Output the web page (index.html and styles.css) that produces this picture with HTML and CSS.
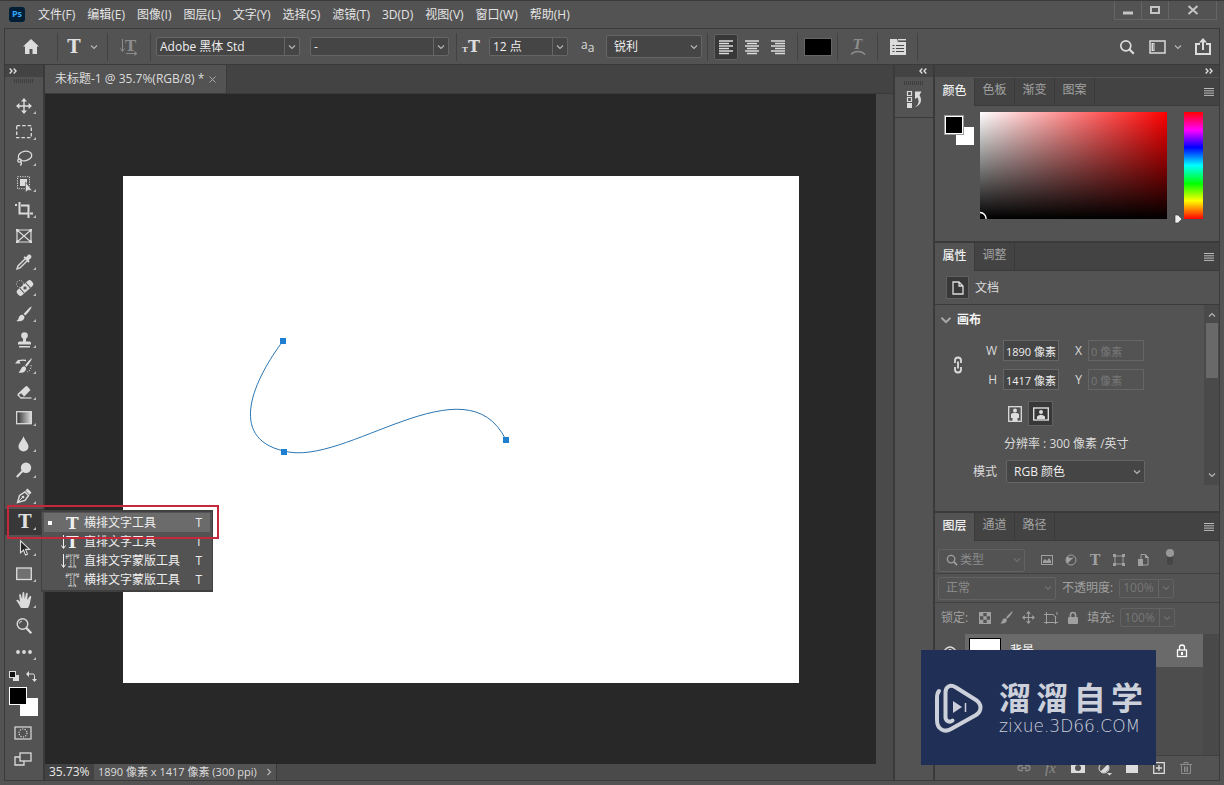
FILE: index.html
```
<!DOCTYPE html>
<html lang="zh-CN">
<head>
    <meta charset="UTF-8">
    <meta name="viewport" content="width=device-width, initial-scale=1.0">
    <title>未标题-1 @ 35.7%(RGB/8) *</title>
    <link rel="stylesheet" href="styles.css">
</head>
<body>
    <!-- shared icon shapes -->
    <svg class="sprite" aria-hidden="true">
        <symbol id="chevron" viewBox="0 0 8 8"><path d="M1 2.5l3 3 3-3" fill="none" stroke="currentColor" stroke-width="1.2"/></symbol>
        <symbol id="lines" viewBox="0 0 10 8"><path d="M0 .5h10M0 2.8h10M0 5.1h10M0 7.4h10" stroke="currentColor"/></symbol>
        <symbol id="dbl" viewBox="0 0 8 6"><path d="M.7.5L3 3 .7 5.5M4.7.5L7 3 4.7 5.5" fill="none" stroke="currentColor" stroke-width="1.4"/></symbol>
        <symbol id="search" viewBox="0 0 16 16"><circle cx="6.8" cy="6.8" r="5" fill="none" stroke="currentColor" stroke-width="1.7"/><path d="M10.5 10.5l4.3 4.3" stroke="currentColor" stroke-width="2.2"/></symbol>
        <symbol id="move" viewBox="0 0 16 16"><path d="M8 2v12M2 8h12" stroke="currentColor" stroke-width="1.4"/><path d="M8 0l3 3.4H5zM8 16l3-3.4H5zM0 8l3.4-3v6zM16 8l-3.4-3v6z" fill="currentColor"/></symbol>
        <symbol id="brush" viewBox="0 0 16 16"><path d="M15.6.4c-1 0-5.8 4.6-8 7.6l1.6 1.6C12 7 16 1.6 15.6.4zM6.8 8.8C4 8.6 3 10.5 2.5 12.500 2.2 13.8 1 14.7.2 15c3.5.8 8.6 0 8.2-4.6z" fill="currentColor"/></symbol>
        <symbol id="lock" viewBox="0 0 12 14"><path d="M3.5 6V4a2.5 2.5 0 0 1 5 0v2" fill="none" stroke="currentColor" stroke-width="1.6"/><rect x="1" y="6" width="10" height="7" rx="1" fill="currentColor"/></symbol>
    </svg>

    <header class="menubar">
        <span class="logo">Ps</span>
        <nav class="menus">
            <a href="#">文件(F)</a>
            <a href="#">编辑(E)</a>
            <a href="#">图像(I)</a>
            <a href="#">图层(L)</a>
            <a href="#">文字(Y)</a>
            <a href="#">选择(S)</a>
            <a href="#">滤镜(T)</a>
            <a href="#">3D(D)</a>
            <a href="#">视图(V)</a>
            <a href="#">窗口(W)</a>
            <a href="#">帮助(H)</a>
        </nav>
        <div class="window-buttons">
            <button aria-label="最小化"><svg width="12" height="10"><path d="M1 8h10" stroke="currentColor" stroke-width="3"/></svg></button>
            <button aria-label="最大化"><svg width="12" height="10"><rect x="2" y="2" width="8" height="6" fill="none" stroke="currentColor" stroke-width="2"/></svg></button>
            <button class="close" aria-label="关闭"><svg width="12" height="10"><path d="M1.5 1l9 8M10.5 1l-9 8" stroke="currentColor" stroke-width="2"/></svg></button>
        </div>
    </header>

    <div class="options">
        <div class="cell home">
            <button aria-label="主页"><svg width="18" height="16" viewBox="0 0 18 16"><path d="M9 0L1 7.5h2V15h4.500v-5h3v5H15V7.500h2z" fill="currentColor"/></svg></button>
        </div>
        <div class="cell type">
            <button class="slab" aria-label="文字工具">T</button>
            <svg class="chev"><use href="#chevron"/></svg>
        </div>
        <div class="cell orient">
            <button class="dim" aria-label="切换文本取向"><svg width="18" height="16"><path d="M2.5 0v12M.5 9.500l2 3 2-3M6 14.500h10M14 12.500l3 2-3 2" fill="none" stroke="currentColor"/><text x="5" y="12" class="svg-t" font-size="15">T</text></svg></button>
        </div>
        <div class="cell fonts">
            <span class="combo split family"><select aria-label="字体"><option>Adobe 黑体 Std</option></select><svg class="chev"><use href="#chevron"/></svg></span>
            <span class="combo split style"><select aria-label="字体样式"><option>-</option></select><svg class="chev"><use href="#chevron"/></svg></span>
        </div>
        <div class="cell size">
            <span class="size-icon"><small>T</small>T</span>
            <span class="combo split points"><select aria-label="字体大小"><option>12 点</option></select><svg class="chev"><use href="#chevron"/></svg></span>
            <span class="aa-icon">a<small>a</small></span>
            <span class="combo tall"><select aria-label="消除锯齿"><option>锐利</option></select><svg class="chev"><use href="#chevron"/></svg></span>
        </div>
        <div class="cell align">
            <button class="on" aria-label="左对齐"><svg width="14" height="14"><path d="M0 1h14M0 3.500h10M0 6h14M0 8.500h10M0 11h14M0 13.500h10" stroke="currentColor" stroke-width="1.3"/></svg></button>
            <button aria-label="居中"><svg width="14" height="14"><path d="M0 1h14M2 3.500h10M0 6h14M2 8.500h10M0 11h14M2 13.500h10" stroke="currentColor" stroke-width="1.3"/></svg></button>
            <button aria-label="右对齐"><svg width="14" height="14"><path d="M0 1h14M4 3.500h10M0 6h14M4 8.500h10M0 11h14M4 13.500h10" stroke="currentColor" stroke-width="1.3"/></svg></button>
        </div>
        <div class="cell narrow"><button class="ink" aria-label="文本颜色"></button></div>
        <div class="cell narrow">
            <button class="dim" aria-label="变形"><svg width="16" height="18"><text x="3" y="11" class="svg-t" font-size="12" font-style="italic">T</text><path d="M1 16.500c3.500-4 10.500-4 14 0" fill="none" stroke="currentColor" stroke-width="1.3"/></svg></button>
        </div>
        <div class="cell narrow">
            <button aria-label="字符面板"><svg width="18" height="18"><path d="M1 1h7l1 3h8v13H1z" fill="currentColor"/><path d="M9 1.700h8" stroke="currentColor" stroke-width="1.4"/><path d="M3.500 7.500h2M7 7.500h8M3.500 10.500h2M7 10.500h8M3.500 13.500h2M7 13.500h8" stroke="#484848" stroke-width="1.1"/></svg></button>
        </div>
        <div class="right-tools">
            <button aria-label="搜索"><svg width="16" height="16"><use href="#search"/></svg></button>
            <button aria-label="工作区"><svg width="17" height="14"><rect x="1" y="1" width="15" height="12" fill="none" stroke="currentColor" stroke-width="1.5"/><path d="M4 3v8" stroke="currentColor" stroke-width="3"/><path d="M4.500 4.500v5" stroke="#535353" stroke-dasharray="1 1"/></svg></button>
            <svg class="chev"><use href="#chevron"/></svg>
            <button aria-label="共享"><svg width="18" height="18"><path d="M6 6H2v10h14V6h-4" fill="none" stroke="currentColor" stroke-width="2"/><path d="M9 12V3" stroke="currentColor" stroke-width="2"/><path d="M9 0l4 4.500H5z" fill="currentColor"/></svg></button>
        </div>
    </div>

    <main class="workspace">
        <aside class="toolbox">
            <div class="strip left"><svg width="8" height="6"><use href="#dbl"/></svg></div>
            <div class="grip"></div>
            <ul class="tools">
                <li><button aria-label="移动"><svg><use href="#move"/></svg></button></li>
                <li><button aria-label="选框"><svg viewBox="0 0 16 16"><rect x=".7" y="1.700" width="14.600" height="12" fill="none" stroke="currentColor" stroke-width="1.3" stroke-dasharray="3.500 2"/></svg></button></li>
                <li><button aria-label="套索"><svg viewBox="0 0 16 16"><g fill="none" stroke="currentColor" stroke-width="1.3"><ellipse cx="9" cy="6" rx="6.800" ry="4.700" transform="rotate(-12 9 6)"/><circle cx="3.500" cy="10.500" r="1.700"/><path d="M4.800 11.500c1 1.500.5 3-.5 4"/></g></svg></button></li>
                <li><button aria-label="对象选择"><svg viewBox="0 0 16 16"><rect x="1.500" y=".7" width="12" height="12" fill="none" stroke="currentColor" stroke-dasharray="1.200 1.200"/><path d="M4 3h7v7H4z" fill="currentColor"/><path d="M9.500 6v10.500l2.400-2.300 4.200.3z" fill="currentColor" stroke="#535353" stroke-width=".6"/></svg></button></li>
                <li><button aria-label="裁剪"><svg viewBox="0 0 16 16"><path d="M-1 3h2M3.500 0v11.500H12M5 3.500h7.500V16M14 11.500h3" fill="none" stroke="currentColor" stroke-width="2"/></svg></button></li>
                <li class="single"><button aria-label="图框"><svg viewBox="0 0 16 16"><path d="M1 2h14v12H1zM1 2l14 12M15 2L1 14" fill="none" stroke="currentColor" stroke-width="1.2"/><path d="M0 1h2.500v2.500H0zM13.500 1H16v2.500h-2.500zM0 12.500h2.500V15H0zM13.500 12.500H16V15h-2.500z" fill="currentColor"/></svg></button></li>
                <li><button aria-label="吸管"><svg viewBox="0 0 16 16"><path d="M9 5L2 12l-1 3 3-1 7-7" fill="none" stroke="currentColor" stroke-width="1.4"/><path d="M7.500 3.500l1.200-1.200 1.300 1L12 1c1.500-1.500 4.500.8 3 3l-2.300 2.300 1 1.200-1.300 1.200z" fill="currentColor"/></svg></button></li>
                <li><button aria-label="修复画笔"><svg viewBox="0 0 16 16"><g transform="rotate(-42 9 8)"><rect x="-.5" y="4.500" width="19" height="7" rx="2.500" fill="currentColor"/><path d="M5 4.500v7M13 4.500v7" stroke="#535353"/><path d="M9 6l2 2-2 2-2-2z" fill="#535353"/></g><circle cx="4" cy="4" r="3.500" fill="none" stroke="currentColor" stroke-dasharray="1 1.500"/></svg></button></li>
                <li><button aria-label="画笔"><svg><use href="#brush"/></svg></button></li>
                <li><button aria-label="仿制图章"><svg viewBox="0 0 16 16"><circle cx="8.500" cy="3.500" r="3.300" fill="currentColor"/><path d="M7 6h3v3.500h3.500a1.500 1.500 0 0 1 1.500 1.500v1.500H2V11a1.500 1.500 0 0 1 1.500-1.500H7zM3 14h11v1.500H3z" fill="currentColor"/></svg></button></li>
                <li><button aria-label="历史记录画笔"><svg viewBox="0 0 16 16"><path d="M16 0c-2 1-5 4.500-7 7.500l1.500 1.300C13 6 15.500 2.500 16 0zM8.500 8.200C5 8 5.500 12 2.500 14.500 6 15.500 10.500 14 10 9.700z" fill="currentColor"/><path d="M1 4c2-2 6-2 9-1.500" fill="none" stroke="currentColor" stroke-width="1.3"/><path d="M-1 5.500L2.500 1.500l2 4z" fill="currentColor"/><path d="M15 7c.5 4-1.500 6.500-4 7" fill="none" stroke="currentColor" stroke-dasharray="1.200 1.500"/></svg></button></li>
                <li><button aria-label="橡皮擦"><svg viewBox="0 0 16 16"><path d="M1.500 10L9.500 2.500c.7-.7 1.500-.7 2 0L14.500 6 7 13.800H4L1.500 11.500z" fill="currentColor"/><path d="M3 10.700l2-1.500 3 3-1 .8H4.500z" fill="#535353"/><path d="M4 14h11.500" stroke="currentColor" stroke-width="1.2"/></svg></button></li>
                <li><button aria-label="渐变"><svg viewBox="0 0 16 16"><defs><linearGradient id="fade"><stop stop-color="#303030"/><stop offset="1" stop-color="#ddd"/></linearGradient></defs><rect x=".7" y="1.700" width="14.600" height="12" fill="url(#fade)" stroke="currentColor" stroke-width="1.3"/></svg></button></li>
                <li><button aria-label="模糊"><svg viewBox="0 0 16 16"><path d="M7.500 0C8.500 4 12.500 7 12.500 10.500a5 5 0 0 1-10 0C2.500 7 6.500 4 7.500 0z" fill="currentColor"/></svg></button></li>
                <li><button aria-label="减淡"><svg viewBox="0 0 16 16"><circle cx="10" cy="5.800" r="5.200" fill="currentColor"/><path d="M6.500 9L.8 15" stroke="currentColor" stroke-width="2"/></svg></button></li>
                <li><button aria-label="钢笔"><svg viewBox="0 0 16 16"><path d="M1.500 14.500L3.500 7.500 9 4l3.500 3.500L9 12.500z" fill="none" stroke="currentColor" stroke-width="1.4"/><path d="M9.500 2.500L11.500.5l4 4-2 2.200z" fill="currentColor"/><path d="M2 14l4-4" stroke="currentColor"/><circle cx="7" cy="9" r="1.300" fill="currentColor"/></svg></button></li>
                <li class="active">
                    <button class="slab" aria-label="文字">T</button>
                    <div class="flyout" role="menu">
                        <button class="current" role="menuitem"><i></i><svg><text x="4" y="14" class="svg-t" font-size="17">T</text></svg><span>横排文字工具</span><kbd>T</kbd></button>
                        <button role="menuitem"><i></i><svg><path d="M1.500 1v13M-.5 11.500l2 3 2-3" fill="none" stroke="currentColor"/><text x="4" y="14" class="svg-t" font-size="17">T</text></svg><span>直排文字工具</span><kbd>T</kbd></button>
                        <button role="menuitem"><i></i><svg><path d="M1.500 1v13M-.5 11.500l2 3 2-3" fill="none" stroke="currentColor"/><text x="4" y="14" class="svg-t mask" font-size="17">T</text></svg><span>直排文字蒙版工具</span><kbd>T</kbd></button>
                        <button role="menuitem"><i></i><svg><text x="4" y="14" class="svg-t mask" font-size="17">T</text></svg><span>横排文字蒙版工具</span><kbd>T</kbd></button>
                    </div>
                    <div class="marker"></div>
                </li>
                <li><button aria-label="路径选择"><svg viewBox="0 0 16 16"><path d="M4.500.8v12l3-2.800 2 5 2-.8-2-4.800h4z" fill="#222" stroke="currentColor" stroke-width="1.1"/></svg></button></li>
                <li><button aria-label="矩形"><svg viewBox="0 0 16 16"><rect x=".7" y="2" width="14.600" height="11.500" fill="#707070" stroke="currentColor" stroke-width="1.3"/></svg></button></li>
                <li><button aria-label="抓手"><svg viewBox="0 0 16 16"><path d="M5 16C3.500 13.500 2 10.500.3 8.500c.7-1.200 2-.7 3.700 1.500L3.200 3c0-1.400 1.600-1.400 1.800 0l1 4L6.500 1c.2-1.300 1.700-1.300 1.800 0L8.700 7 10 1.500c.4-1.200 1.800-1 1.700.3L11.200 8l2.300-3.500c.8-1 2-.3 1.700.8-1.200 4-1.200 8.200-3.200 10.700z" fill="currentColor"/></svg></button></li>
                <li class="single"><button aria-label="缩放"><svg viewBox="0 0 16 16"><circle cx="6.500" cy="6" r="5.300" fill="none" stroke="currentColor" stroke-width="1.4"/><path d="M10.300 10l5 5.200" stroke="currentColor" stroke-width="2.300"/><path d="M3.500 5.500A3 3 0 0 1 6 3" fill="none" stroke="currentColor"/></svg></button></li>
                <li><button aria-label="编辑工具栏"><svg viewBox="0 0 16 16"><circle cx="2" cy="8" r="1.900" fill="currentColor"/><circle cx="8" cy="8" r="1.900" fill="currentColor"/><circle cx="14" cy="8" r="1.900" fill="currentColor"/></svg></button></li>
            </ul>
            <div class="mini-row">
                <svg width="11" height="11"><rect x="4" y="4" width="6" height="6" fill="#ddd"/><rect x=".5" y=".5" width="6" height="6" fill="#111" stroke="#ddd"/></svg>
                <svg width="11" height="11"><path d="M2 3h5q1.500 0 1.500 1.500V9" fill="none" stroke="#ddd"/><path d="M0 3l3-3v6zM8.500 11l-2.500-3h5z" fill="#ddd"/></svg>
            </div>
            <div class="swatches"><b></b><i></i></div>
            <div class="mode-row"><button aria-label="快速蒙版"><svg width="18" height="14"><rect x="1" y="1" width="16" height="12" fill="none" stroke="currentColor" stroke-width="1.2"/><circle cx="9" cy="7" r="4" fill="none" stroke="currentColor" stroke-width="1.2" stroke-dasharray="1.200 1.300"/></svg></button></div>
            <div class="mode-row"><button aria-label="屏幕模式"><svg width="18" height="14"><rect x="6" y="1" width="11" height="8" fill="none" stroke="currentColor" stroke-width="1.3"/><path d="M6 5H1v8h9V9" fill="none" stroke="currentColor" stroke-width="1.3"/></svg></button></div>
        </aside>

        <section class="document">
            <div class="doc-tabs">
                <div class="doc-tab">未标题-1 @ 35.7%(RGB/8) * <button aria-label="关闭"><svg width="7" height="7"><path d="M.5.5l6 6M6.500.5l-6 6" stroke="currentColor"/></svg></button></div>
            </div>
            <div class="stage">
                <svg class="paper" viewBox="0 0 676 507">
                    <path d="M160 165C132 202 103 262 161 275C222 292 343 182 383 264" fill="none" class="guide"/>
                    <path d="M157 162h6v6h-6zM158 273h6v6h-6zM380 261h6v6h-6z" fill="#1e7fd0"/>
                </svg>
            </div>
            <div class="vscroll"></div>
            <footer class="status">
                <span class="zoom">35.73%</span>
                <button>1890 像素 x 1417 像素 (300 ppi)<svg class="chev side"><use href="#chevron"/></svg></button>
            </footer>
        </section>

        <aside class="dock">
            <div class="strip"><svg class="flip" width="8" height="6"><use href="#dbl"/></svg></div>
            <div class="dock-group">
                <div class="grip"></div>
                <button aria-label="历史记录"><svg width="16" height="18"><path d="M1.500 1.500h4v4h-4zM1.500 7.500h4v4h-4z" fill="none" stroke="currentColor" stroke-width="1.2"/><path d="M1 13h5v5H1z" fill="currentColor"/><path d="M8.500 17c4.500-2 5-6 3-9.500L9 9V1.500h6.500L13.500 5c3.500 6 .5 11-5 12z" fill="currentColor"/></svg></button>
            </div>
        </aside>

        <aside class="panels">
            <div class="strip"><svg width="8" height="6"><use href="#dbl"/></svg></div>

            <section class="panel color">
                <div class="tabs">
                    <button class="on">颜色</button><button>色板</button><button>渐变</button><button>图案</button>
                    <svg class="lines"><use href="#lines"/></svg>
                </div>
                <div class="picker">
                    <div class="swatches framed"><b></b><i></i></div>
                    <div class="field"><svg width="8" height="8"><path d="M0 1.500A6 6 0 0 1 6 8" fill="none" stroke="#fff" stroke-width="1.4"/></svg></div>
                    <div class="hue"><svg width="8" height="8"><path d="M1 0h3l4 4-4 4H1z" fill="#eee" stroke="#333" stroke-width=".6"/></svg></div>
                </div>
            </section>

            <section class="panel props">
                <div class="tabs">
                    <button class="on">属性</button><button>调整</button>
                    <svg class="lines"><use href="#lines"/></svg>
                </div>
                <div class="doc-row">
                    <span class="doc-icon"><svg width="12" height="14"><path d="M1 1h6l4 4v8H1zM7 1v4h4" fill="none" stroke="currentColor" stroke-width="1.3"/></svg></span>
                    文档
                </div>
                <div class="props-body">
                    <div class="props-form">
                        <h2><svg class="fold"><use href="#chevron"/></svg>画布</h2>
                        <div class="dims">
                            <svg class="link" width="10" height="16"><path d="M2 6V3.500a2.500 2.500 0 0 1 6 0V6M2 10v2.500a2.500 2.500 0 0 0 6 0V10" fill="none" stroke="currentColor" stroke-width="1.800"/><path d="M5 4.500v7" stroke="currentColor" stroke-width="1.800"/></svg>
                            <label for="w">W</label><input id="w" type="text" value="1890 像素">
                            <label for="x">X</label><input id="x" type="text" value="0 像素" disabled>
                            <label for="h">H</label><input id="h" type="text" value="1417 像素">
                            <label for="y">Y</label><input id="y" type="text" value="0 像素" disabled>
                        </div>
                        <div class="facing">
                            <button aria-label="纵向"><svg width="14" height="16"><rect x=".7" y=".7" width="12.600" height="14.600" fill="none" stroke="currentColor" stroke-width="1.3"/><circle cx="7" cy="4.500" r="2" fill="currentColor"/><path d="M3 8q4-2.500 8 0v4H9.500v3h-5v-3H3z" fill="currentColor"/></svg></button>
                            <button class="on" aria-label="横向"><svg width="16" height="14"><rect x=".7" y="1" width="14.600" height="12" fill="none" stroke="currentColor" stroke-width="1.4"/><circle cx="8" cy="5" r="2" fill="currentColor"/><path d="M4 12V9.500q4-3.500 8 0V12z" fill="currentColor"/></svg></button>
                        </div>
                        <p class="res">分辨率 : 300 像素 /英寸</p>
                        <div class="mode">
                            <label for="mode">模式</label>
                            <span class="combo tall"><select id="mode"><option>RGB 颜色</option></select><svg class="chev"><use href="#chevron"/></svg></span>
                        </div>
                    </div>
                    <div class="scrollbar"><svg class="chev up"><use href="#chevron"/></svg><i></i><svg class="chev"><use href="#chevron"/></svg></div>
                </div>
            </section>

            <section class="panel layers">
                <div class="tabs">
                    <button class="on">图层</button><button>通道</button><button>路径</button>
                    <svg class="lines"><use href="#lines"/></svg>
                </div>
                <div class="layer-row filter">
                    <span class="combo tall faint"><svg class="find"><use href="#search"/></svg><select aria-label="筛选"><option>类型</option></select><svg class="chev"><use href="#chevron"/></svg></span>
                    <div class="filter-icons">
                        <svg width="12" height="10"><rect x=".5" y=".5" width="11" height="9" fill="none" stroke="currentColor"/><path d="M2 8V6l2-2 2 2 2-3 2 3v2z" fill="currentColor"/></svg>
                        <svg width="12" height="12"><circle cx="6" cy="6" r="5" fill="none" stroke="currentColor"/><path d="M9.500 2.500a5 5 0 0 1-7 0a5 5 0 0 0 0 7z" fill="currentColor"/></svg>
                        <svg width="12" height="12"><text x="1" y="11" class="svg-t" font-size="14">T</text></svg>
                        <svg width="12" height="12"><rect x="2" y="2" width="8" height="8" fill="none" stroke="currentColor"/><path d="M0 0h3v3H0zM9 0h3v3H9zM0 9h3v3H0zM9 9h3v3H9z" fill="currentColor"/></svg>
                        <svg width="12" height="12"><path d="M4 5V.5h4.500L11 3v8H6" fill="none" stroke="currentColor"/><path d="M1 5h5v7H1zM8 0v4h4z" fill="currentColor"/></svg>
                    </div>
                    <svg class="toggle" width="10" height="18"><rect x="2" y="5" width="6" height="12" rx="2" fill="#464646"/><circle cx="5" cy="5" r="4" fill="#999"/></svg>
                </div>
                <div class="layer-row">
                    <span class="combo tall faint blend"><select aria-label="混合模式"><option>正常</option></select><svg class="chev"><use href="#chevron"/></svg></span>
                    <label for="opacity">不透明度:</label>
                    <span class="combo split faint percent"><select id="opacity"><option>100%</option></select><svg class="chev"><use href="#chevron"/></svg></span>
                </div>
                <div class="layer-row last">
                    <span>锁定:</span>
                    <div class="lock-icons">
                        <svg width="12" height="12"><rect x=".5" y=".5" width="11" height="11" fill="none" stroke="currentColor"/><path d="M1 1h3.300v3.300H1zM7.700 1H11v3.300H7.700zM4.300 4.300h3.400v3.400H4.300zM1 7.700h3.300V11H1zM7.700 7.700H11V11H7.700z" fill="currentColor"/></svg>
                        <svg width="13" height="13"><use href="#brush"/></svg>
                        <svg width="13" height="13"><use href="#move"/></svg>
                        <svg width="14" height="12"><path d="M0 2.500h9.500M2.500 0v12M0 10.500h14M11.500 4v8M9 2.500l3 3M13 0v3" fill="none" stroke="currentColor"/></svg>
                        <svg width="12" height="14"><use href="#lock"/></svg>
                    </div>
                    <label for="fill">填充:</label>
                    <span class="combo split faint percent"><select id="fill"><option>100%</option></select><svg class="chev"><use href="#chevron"/></svg></span>
                </div>
                <div class="layer-list">
                    <div class="layer">
                        <span class="eye"><svg width="14" height="10"><path d="M1 5q6-8 12 0q-6 8-12 0z" fill="none" stroke="currentColor" stroke-width="1.3"/><circle cx="7" cy="5" r="2" fill="currentColor"/></svg></span>
                        <div class="layer-info">
                            <span class="thumb"></span>
                            <span class="name">背景</span>
                            <svg class="lock" width="12" height="14"><path d="M3.500 6V3.500a2.500 2.500 0 0 1 5 0V6" fill="none" stroke="currentColor" stroke-width="1.3"/><rect x="1.500" y="6" width="9" height="6.500" fill="none" stroke="currentColor" stroke-width="1.3"/><path d="M5 8h2v3H5z" fill="currentColor"/></svg>
                        </div>
                    </div>
                    <div class="track"></div>
                </div>
                <footer class="layer-actions">
                    <button class="dim" aria-label="链接"><svg width="14" height="8"><path d="M6 1.500H3.500a2.500 2.500 0 0 0 0 5H6M8 1.500h2.500a2.500 2.500 0 0 1 0 5H8M4 4h6" fill="none" stroke="currentColor" stroke-width="1.3"/></svg></button>
                    <button class="dim fx" aria-label="图层样式">fx</button>
                    <button aria-label="蒙版"><svg width="14" height="10"><path d="M0 0h14v10H0z" fill="currentColor"/><circle cx="7" cy="5" r="3" fill="#535353"/></svg></button>
                    <button aria-label="调整图层"><svg width="14" height="14"><circle cx="6" cy="7" r="5" fill="none" stroke="currentColor"/><path d="M9.500 3.500a5 5 0 0 1-7 7zM9 12h5l-2.500 2.500z" fill="currentColor"/></svg></button>
                    <button aria-label="新建组"><svg width="12" height="10"><path d="M0 0h5l1 2h6v8H0z" fill="currentColor"/></svg></button>
                    <button aria-label="新建图层"><svg width="12" height="12"><path d="M.7.7h10.600v10.600H.7zM6 3v6M3 6h6" fill="none" stroke="currentColor" stroke-width="1.3"/></svg></button>
                    <button class="dim" aria-label="删除"><svg width="12" height="12"><path d="M0 2.500h12M4 2V.5h4V2M1.500 3v8.500h9V3M4.500 4.500V10M6 4.500V10M7.500 4.500V10" fill="none" stroke="currentColor"/></svg></button>
                </footer>
            </section>
        </aside>
    </main>

    <div class="watermark">
        <svg width="48" height="50" viewBox="0 0 48 50">
            <path d="M4 8C2 10 2 12 2 15v22c0 9 7 13 14 9l25-14c6-4 6-11 0-15L21 4.500c-6-3.500-10.500-1-10.500 5V34c0 4 4 6 7 3.500" fill="none" stroke="#ccd0da" stroke-width="4" stroke-linecap="round" stroke-linejoin="round"/>
            <path d="M18 18l9 6-9 6z" fill="#ccd0da"/><path d="M30.500 20v9" stroke="#ccd0da" stroke-width="1.5"/>
        </svg>
        <div class="wm-text">
            <div class="wm-title"><span>溜</span><span>溜</span><span>自</span><span>学</span></div>
            <div class="wm-url">zixue.3D66.COM</div>
        </div>
    </div>
</body>
</html>
```
FILE: styles.css
```
* {
    box-sizing: border-box;
}
body {
    margin: 0;
    height: 100vh;
    padding: 0 4px 4px;
    display: flex;
    flex-direction: column;
    background-color: #535353;
    color: #dcdcdc;
    font-family: "Open Sans", "Noto Sans CJK SC", sans-serif;
    font-size: 12px;
    line-height: 16px;
    overflow: hidden;
    border-top: 1px solid #3a3a3a;
}
svg {
    display: block;
    overflow: visible;
    flex: none;
}
button {
    display: flex;
    align-items: center;
    justify-content: center;
    padding: 0;
    border: none;
    background: none;
    color: inherit;
    font: inherit;
}
.sprite {
    position: absolute;
    width: 0;
    height: 0;
}
.dim {
    color: #8c8c8c;
}
.chev {
    width: 8px;
    height: 8px;
    color: #b5b5b5;
}
.svg-t {
    font-family: "DejaVu Serif", serif;
    font-weight: bold;
    fill: currentColor;
}
.svg-t.mask {
    fill: none;
    stroke: currentColor;
    stroke-width: 1px;
    stroke-dasharray: 1 1;
}
.slab {
    font-family: "DejaVu Serif", serif;
    font-size: 18px;
    font-weight: bold;
    color: #e0e0e0;
}

/* menu bar */
.menubar {
    display: flex;
    align-items: center;
    height: 27px;
    padding-left: 5px;
    flex: none;
}
.logo {
    width: 16px;
    height: 15px;
    border-radius: 3px;
    background-color: #001e36;
    color: #31a8ff;
    font-size: 9px;
    font-weight: bold;
    line-height: 14px;
    text-align: center;
}
.menus {
    display: flex;
    gap: 12px;
    margin-left: 13px;
    flex: 1;
}
.menus a {
    color: #e4e4e4;
    text-decoration: none;
    white-space: nowrap;
}
.window-buttons {
    display: flex;
    align-self: flex-start;
    height: 19px;
    margin-right: 3px;
    border: 1px solid #656565;
    border-top: none;
    color: #c4c4c4;
}
.window-buttons button {
    width: 27px;
    border-right: 1px solid #656565;
}
.window-buttons .close {
    width: 47px;
    border-right: none;
}

/* options bar */
.options {
    display: flex;
    align-items: center;
    height: 37px;
    flex: none;
    border: 1px solid #3a3a3a;
}
.cell {
    display: flex;
    align-items: center;
    height: 28px;
    border-right: 1px solid #424242;
}
.home {
    width: 53px;
    justify-content: center;
}
.type {
    width: 50px;
    justify-content: center;
    gap: 9px;
}
.orient {
    width: 43px;
    justify-content: center;
}
.fonts {
    gap: 10px;
    padding: 0 7px 0 5px;
}
.size {
    padding: 0 5px;
}
.narrow {
    width: 40px;
    justify-content: center;
}
.combo {
    display: flex;
    align-items: center;
    position: relative;
    height: 19px;
    border: 1px solid #666;
    background-color: #454545;
    border-radius: 2px;
}
.combo.tall {
    height: 23px;
}
.combo select {
    appearance: none;
    width: 100%;
    height: 100%;
    padding: 0 16px 0 3px;
    border: none;
    background: none;
    color: #eee;
    font: inherit;
}
.combo.tall select {
    padding-left: 7px;
}
.combo .chev {
    position: absolute;
    right: 3px;
}
.combo.split::after {
    content: "";
    position: absolute;
    right: 14px;
    top: 0;
    bottom: 0;
    border-right: 1px solid #666;
}
.family {
    width: 144px;
}
.style {
    width: 139px;
}
.points {
    width: 79px;
    margin-left: 9px;
}
.size .tall {
    width: 96px;
    margin-left: 12px;
}
.size-icon {
    width: 18px;
    font: bold 16px "DejaVu Serif", serif;
    white-space: nowrap;
}
.size-icon small {
    font-size: 8px;
}
.aa-icon {
    display: flex;
    width: 13px;
    margin-left: 13px;
}
.aa-icon small {
    font-size: 12px;
    padding-top: 3px;
}
.align {
    gap: 2px;
    padding: 0 7px 0 6px;
}
.align button {
    width: 24px;
    height: 26px;
    border: 1px solid transparent;
    border-radius: 2px;
}
.align .on,
.facing .on {
    background-color: #383838;
    border: 1px solid #626262;
}
.ink {
    width: 28px;
    height: 18px;
    background-color: #000;
    border: 1px solid #666;
}
.right-tools {
    display: flex;
    align-items: center;
    gap: 14px;
    margin-left: auto;
    padding-right: 7px;
}
.right-tools .chev {
    margin: 0 -2px 0 -6px;
}

/* workspace */
.workspace {
    flex: 1;
    min-height: 0;
    display: grid;
    grid-template-columns: 38px minmax(0, 1fr) 38px 284px;
    grid-template-rows: minmax(0, 1fr);
    gap: 2px;
    background-color: #3a3a3a;
    border: 1px solid #3a3a3a;
    border-top: none;
}
.strip {
    display: flex;
    align-items: center;
    justify-content: flex-end;
    height: 12px;
    padding: 0 6px;
    background-color: #434343;
    margin-bottom: 1px;
    flex: none;
}
.strip.left {
    justify-content: flex-start;
    padding: 0 4px;
}
.flip {
    transform: scaleX(-1);
}
.toolbox,
.dock {
    background-color: #535353;
}
.strip + .grip,
.dock .grip {
    margin: 2px auto 0;
}
.grip {
    width: 20px;
    height: 4px;
    background: repeating-linear-gradient(90deg, #3e3e3e 0 1px, transparent 1px 2px);
}
.tools {
    list-style: none;
    margin: 10px 0 0;
    padding: 0;
}
.tools li {
    position: relative;
    height: 26px;
}
.tools li > button {
    width: 38px;
    height: 26px;
}
.tools li > button svg {
    width: 16px;
    height: 16px;
}
.tools li::after {
    content: "";
    position: absolute;
    right: 7px;
    bottom: 5px;
    border-left: 3px solid transparent;
    border-bottom: 3px solid #bbb;
}
.tools .single::after {
    display: none;
}
.tools .active > button {
    background-color: #383838;
    padding-left: 2px;
}
.flyout {
    position: absolute;
    z-index: 2;
    left: 36px;
    top: 1px;
    width: 172px;
    padding: 3px 2px;
    background-color: #535353;
    border: 1px solid #404040;
    border-width: 0 1px;
    box-shadow: inset 0 2px #404040, inset 0 -2px #404040;
}
.flyout button {
    width: 100%;
    height: 19px;
    padding: 0 8px 0 4px;
    color: #eee;
}
.flyout .current {
    background-color: #6b6b6b;
}
.flyout i {
    width: 4px;
    height: 4px;
}
.flyout .current i {
    background-color: #fff;
}
.flyout svg {
    width: 18px;
    height: 16px;
    margin: 0 4px 0 10px;
}
.flyout span {
    flex: 1;
    text-align: left;
}
.flyout kbd {
    font: inherit;
}
.marker {
    position: absolute;
    z-index: 3;
    left: 2px;
    top: -4px;
    width: 212px;
    height: 34px;
    border: 2px solid #c4283a;
}
.mini-row {
    display: flex;
    gap: 6px;
    height: 12px;
    margin: 6px 0 0 4px;
}
.swatches {
    position: relative;
    width: 29px;
    height: 29px;
    margin: 4px 0 0 4px;
}
.swatches b,
.swatches i {
    position: absolute;
    width: 18px;
    height: 18px;
}
.swatches b {
    z-index: 1;
    left: 0;
    top: 0;
    background-color: #000;
    border: 1px solid #fff;
}
.swatches i {
    right: 0;
    bottom: 0;
    background-color: #fff;
}
.framed b {
    outline: 1px solid #999;
}
.mode-row {
    display: flex;
    height: 26px;
    padding-left: 9px;
}
.swatches + .mode-row {
    margin-top: 4px;
}

/* document window */
.document {
    display: grid;
    grid-template-columns: minmax(0, 1fr) 17px;
    grid-template-rows: 29px minmax(0, 1fr) 16px;
    background-color: #4a4a4a;
}
.doc-tabs {
    grid-column: 1 / 3;
    display: flex;
    background-color: #434343;
    border-bottom: 1px solid #3a3a3a;
}
.doc-tab {
    display: flex;
    align-items: center;
    gap: 5px;
    padding: 0 10px;
    background-color: #535353;
    border-right: 1px solid #3a3a3a;
}
.doc-tab button {
    color: #aaa;
}
.stage {
    display: flex;
    align-items: center;
    justify-content: center;
    background-color: #282828;
    overflow: hidden;
}
.paper {
    width: 676px;
    background-color: #fff;
}
.guide {
    stroke: #2a76b4;
    stroke-width: 1px;
}
.status {
    grid-column: 1 / 3;
    display: flex;
    align-items: center;
}
.zoom {
    width: 49px;
    padding-left: 4px;
    background-color: #434343;
    color: #e8e8e8;
}
.status button {
    gap: 8px;
    height: 16px;
    padding: 0 3px 0 4px;
    background-color: #535353;
    border-right: 1px solid #3a3a3a;
    font-size: 11px;
}
.side {
    transform: rotate(-90deg);
}

/* collapsed dock */
.dock-group {
    padding-top: 1px;
    height: 40px;
    border-bottom: 1px solid #3a3a3a;
}
.dock-group button {
    width: 38px;
    margin-top: 5px;
}

/* panels */
.panels {
    display: flex;
    flex-direction: column;
    min-height: 0;
    background-color: #535353;
}
.panel {
    flex: none;
    border-bottom: 2px solid #3a3a3a;
}
.tabs {
    display: flex;
    align-items: stretch;
    height: 28px;
    background-color: #434343;
    border-bottom: 1px solid #3a3a3a;
}
.tabs button {
    width: 40px;
    border-right: 1px solid #3a3a3a;
    color: #a2a2a2;
    padding-bottom: 3px;
}
.tabs .on {
    background-color: #535353;
    color: #f0f0f0;
    font-weight: 500;
    margin-bottom: -1px;
}
.lines {
    width: 10px;
    height: 8px;
    margin: 10px 5px 0 auto;
    color: #bbb;
}
.color {
    height: 165px;
}
.picker {
    display: flex;
    padding: 6px 16px 0 10px;
}
.framed {
    margin: 4px 6px 0 0;
}
.field {
    display: flex;
    align-items: flex-end;
    flex: 1;
    height: 107px;
    background: linear-gradient(to top, #000, transparent), linear-gradient(to right, #fff, #f00);
    overflow: hidden;
}
.hue {
    position: relative;
    width: 19px;
    margin-left: 17px;
    background: linear-gradient(#f00, #f0f 17%, #00f 33%, #0ff 50%, #0f0 67%, #ff0 83%, #f00);
}
.hue svg {
    position: absolute;
    left: -10px;
    bottom: -4px;
}
.props {
    height: 270px;
}
.doc-row {
    display: flex;
    align-items: center;
    gap: 6px;
    height: 34px;
    padding-left: 11px;
    border-bottom: 1px solid #3a3a3a;
}
.doc-icon {
    display: flex;
    align-items: center;
    justify-content: center;
    width: 23px;
    height: 23px;
    background-color: #383838;
    border: 1px solid #606060;
}
.props-body {
    display: flex;
}
.props-form {
    flex: 1;
    height: 180px;
}
.props h2 {
    display: flex;
    align-items: center;
    gap: 5px;
    margin: 7px 0 12px 5px;
    font-size: 12px;
    line-height: 16px;
    color: #f4f4f4;
}
.fold {
    width: 12px;
    height: 12px;
    color: #aaa;
}
.dims {
    display: grid;
    grid-template-columns: 34px 18px 56px 17px 56px;
    grid-template-rows: 21px 21px;
    gap: 8px 6px;
    align-items: center;
    text-align: right;
    margin-left: 4px;
}
.link {
    grid-row: 1 / 3;
    justify-self: center;
    margin-left: 4px;
}
.dims input {
    width: 56px;
    height: 21px;
    padding: 0 2px;
    border: 1px solid #666;
    background-color: #454545;
    color: #eee;
    font: inherit;
    font-size: 11px;
}
.dims input:disabled {
    background: none;
    color: #777;
}
.facing {
    display: flex;
    gap: 1px;
    margin: 11px 0 10px 67px;
}
.facing button {
    width: 25px;
    height: 25px;
}
.res {
    margin: 0 0 8px 69px;
}
.mode {
    display: flex;
    align-items: center;
    gap: 9px;
    margin-left: 38px;
}
.mode .combo {
    width: 139px;
}
.scrollbar {
    display: flex;
    flex-direction: column;
    align-items: center;
    width: 15px;
    height: 180px;
    padding: 6px 0;
    background-color: #4a4a4a;
}
.scrollbar i {
    width: 12px;
    height: 55px;
    margin: 4px 0 auto;
    background-color: #696969;
}
.up {
    transform: rotate(180deg);
}

/* layers panel */
.layers {
    flex: 1;
    display: flex;
    flex-direction: column;
    min-height: 0;
    border-bottom: none;
}
.layers .tabs {
    flex: none;
}
.layer-row {
    display: flex;
    align-items: center;
    gap: 6px;
    height: 29px;
    padding-left: 3px;
    border-bottom: 1px solid #404040;
    color: #a0a0a0;
    flex: none;
}
.layer-row.filter {
    height: 33px;
    padding-top: 6px;
}
.layer-row.last {
    padding-left: 6px;
    border-bottom: none;
}
.filter .combo {
    width: 87px;
}
.blend {
    width: 118px;
}
.faint {
    background: none;
    border-color: #626262;
}
.faint select {
    color: #8c8c8c;
}
.faint .chev {
    color: #707070;
}
.percent select {
    color: #777;
}
.find {
    width: 12px;
    height: 12px;
    margin-left: 7px;
}
.filter .find + select {
    padding-left: 2px;
}
.filter-icons {
    display: flex;
    align-items: center;
    gap: 12px;
    margin-left: 10px;
}
.toggle {
    margin: -6px 0 0 10px;
}
.percent {
    width: 55px;
    margin-right: auto;
}
.lock-icons {
    display: flex;
    align-items: center;
    gap: 9px;
    margin: 0 2px 0 5px;
}
.layer-list {
    display: flex;
    flex: 1;
    min-height: 0;
    margin-top: 2px;
    background-color: #4d4d4d;
}
.layer {
    display: flex;
    flex: 1;
    height: 33px;
}
.eye {
    display: flex;
    align-items: center;
    justify-content: center;
    width: 30px;
    background-color: #535353;
}
.layer-info {
    display: flex;
    align-items: center;
    flex: 1;
    padding: 0 15px 0 4px;
    background-color: #6a6a6a;
    color: #fff;
}
.thumb {
    width: 32px;
    height: 25px;
    background-color: #fff;
    border: 1px solid #000;
}
.name {
    flex: 1;
    margin-left: 9px;
}
.track {
    width: 16px;
    background-color: #494949;
}
.layer-actions {
    display: flex;
    align-items: center;
    justify-content: flex-end;
    height: 25px;
    padding-right: 20px;
    border-top: 1px solid #404040;
    flex: none;
}
.layer-actions button {
    width: 27px;
}
.fx {
    font-family: "Liberation Serif", serif;
    font-style: italic;
    font-size: 15px;
}

/* site badge over the window */
.watermark {
    position: fixed;
    z-index: 5;
    right: 68px;
    bottom: 20px;
    width: 235px;
    height: 115px;
    display: flex;
    align-items: center;
    gap: 16px;
    padding: 0 13px 0 14px;
    background-color: #202f55;
    color: #ccd0da;
}
.wm-text {
    flex: 1;
}
.wm-title {
    display: flex;
    justify-content: space-between;
    font-size: 32px;
    line-height: 36px;
    font-weight: bold;
}
.wm-url {
    font-family: "DejaVu Sans", sans-serif;
    font-size: 17px;
    font-weight: 200;
    line-height: 20px;
    white-space: nowrap;
}
```
